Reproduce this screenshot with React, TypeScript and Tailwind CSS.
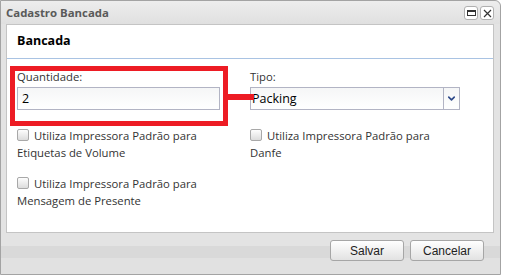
import { ChevronDown } from 'lucide-react';

const ui = { fontFamily: '"Open Sans", "Noto Sans", sans-serif' };
const btn = { fontFamily: '"Liberation Sans", Arial, sans-serif' };

function Check({ label, rest }: { label: string; rest: string }) {
  return (
    <div className="text-[11.3px] leading-[17px] text-[#333]">
      <span className="inline-block align-[-1px] w-[12px] h-[12px] mr-[5px] rounded-[2px] border border-[#a8a8a8] bg-gradient-to-b from-[#fdfdfd] to-[#dcdcdc]" />
      {label}
      <br />
      {rest}
    </div>
  );
}

export default function App() {
  return (
    <div className="relative w-[511px] h-[280px] bg-white overflow-hidden" style={ui}>
      <div className="w-[501px] h-[275px] flex flex-col border border-[#a3a3a3] rounded-tr-[6px] bg-[#e3e3e3] pl-[5px] pr-[6px]">
        {/* title bar */}
        <div className="h-[23px] flex items-center justify-between bg-gradient-to-b from-[#ededed] to-[#e0e0e0] -ml-[5px] -mr-[6px] pl-[5px] pr-[6px] rounded-tr-[6px]">
          <span className="text-[11.4px] font-bold text-[#5a5a5a]">Cadastro Bancada</span>
          <div className="flex gap-[2px] mt-[1px]">
            <div className="w-[14px] h-[14px] rounded-[3px] border border-[#b0b0b0] bg-white flex items-center justify-center">
              <div className="w-[9px] h-[6px] border border-[#333] border-t-2" />
            </div>
            <div className="w-[14px] h-[14px] rounded-[3px] border border-[#b0b0b0] bg-white flex items-center justify-center">
              <svg width="9" height="9" viewBox="0 0 9 9"><path d="M1 1 L8 8 M8 1 L1 8" stroke="#333" strokeWidth="1.2" /></svg>
            </div>
          </div>
        </div>

        {/* content panel */}
        <div className="h-[209px] bg-white border border-[#c4c4c4]">
          <div className="h-[34px] flex items-center px-[10px] border-b border-[#a9c3e3]">
            <span className="text-[12.5px] font-bold text-black">Bancada</span>
          </div>
          <div className="px-[10px] pt-[9px]">
            <div className="grid grid-cols-[233px_210px]">
              <div>
                <div className="text-[11.3px] leading-[17px] text-[#333] mb-[2px]">Quantidade:</div>
                <div className="w-[203px] h-[23px] border border-[#b2b4c4] bg-gradient-to-b from-[#f5f6f7] to-white px-[4px] text-[12.5px] leading-[21px] text-black">2</div>
              </div>
              <div>
                <div className="text-[11.3px] leading-[17px] text-[#333] mb-[2px]">Tipo:</div>
                <div className="w-[210px] h-[23px] flex border border-[#b2b4c4] bg-gradient-to-b from-[#f5f6f7] to-white">
                  <span className="flex-1 px-[1px] text-[12.5px] leading-[21px] text-black">Packing</span>
                  <div className="w-[16px] border-l border-[#b2b4c4] flex items-center justify-center">
                    <ChevronDown size={11} strokeWidth={3.5} color="#2e4a8a" />
                  </div>
                </div>
              </div>
            </div>
            <div className="grid grid-cols-[233px_210px] mt-[17px]">
              <Check label="Utiliza Impressora Padrão para" rest="Etiquetas de Volume" />
              <Check label="Utiliza Impressora Padrão para" rest="Danfe" />
            </div>
            <div className="mt-[14px]">
              <Check label="Utiliza Impressora Padrão para" rest="Mensagem de Presente" />
            </div>
          </div>
        </div>

        {/* footer */}
        <div className="flex-1 relative -ml-[5px] -mr-[6px] flex flex-col">
          <div className="h-[13px] bg-[#e3e3e3]" />
          <div className="h-[12px] bg-[#d9d9d9]" />
          <div className="flex-1 bg-[#e1e1e1]" />
          <div className="absolute right-[16px] top-[7px] flex gap-[6px]" style={btn}>
            <button className="w-[74px] h-[21px] rounded-[3px] border border-[#a6a6a6] bg-gradient-to-b from-white to-[#e2e2e2] text-[12px] text-[#222]">Salvar</button>
            <button className="w-[74px] h-[21px] rounded-[3px] border border-[#a6a6a6] bg-gradient-to-b from-white to-[#e2e2e2] text-[12px] text-[#222]">Cancelar</button>
          </div>
        </div>
      </div>

      {/* red annotation */}
      <div className="absolute left-[10px] top-[66px] w-[218px] h-[60px] border-[5px] border-[#ed1c24]" />
      <div className="absolute left-[227px] top-[94px] w-[27px] h-[6px] bg-[#ed1c24]" />
    </div>
  );
}
